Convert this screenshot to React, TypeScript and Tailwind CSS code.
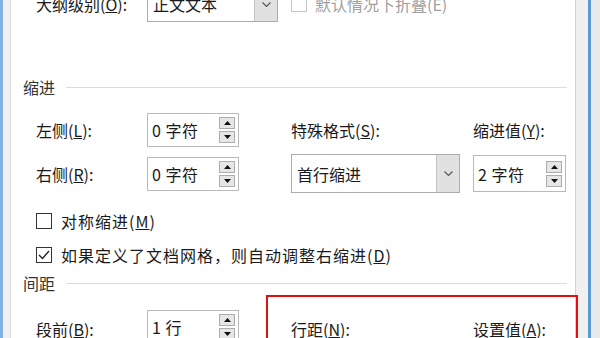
import React from "react";

const font = { fontFamily: '"Noto Sans CJK SC", "Noto Sans", sans-serif' };

function Spin({ value, width = "w-[92px]", height = "h-[34px]" }: { value: string; width?: string; height?: string }) {
  return (
    <div className={`${width} ${height} flex items-center justify-between border border-[#b9b9b9] bg-white pl-[4px] pr-[3px]`}>
      <span className="text-[16px] leading-none text-[#1a1a1a] tracking-[0.5px]">{value}</span>
      <div className="flex flex-col gap-[2px]">
        <div className="w-[16px] h-[12px] bg-[#e6e6e6] border border-[#adadad] flex items-center justify-center">
          <svg width="7" height="4" viewBox="0 0 7 4"><path d="M3.5 0L7 4H0z" fill="#111" /></svg>
        </div>
        <div className="w-[16px] h-[12px] bg-[#e6e6e6] border border-[#adadad] flex items-center justify-center">
          <svg width="7" height="4" viewBox="0 0 7 4"><path d="M0 0H7L3.5 4z" fill="#111" /></svg>
        </div>
      </div>
    </div>
  );
}

function Select({ value, width, height }: { value: string; width: string; height: string }) {
  return (
    <div className={`${width} ${height} flex border border-[#acacac] bg-white`}>
      <div className="flex-1 flex items-center pl-[5px] text-[16px] leading-none text-[#1a1a1a]">{value}</div>
      <div className="w-[23px] bg-[#e1e1e1] border-l border-[#c4c4c4] flex items-center justify-center">
        <svg width="9" height="5" viewBox="0 0 9 5"><path d="M0.5 0.5l4 4 4-4" stroke="#555" strokeWidth="1.1" fill="none" /></svg>
      </div>
    </div>
  );
}

function Checkbox({ checked = false, disabled = false }: { checked?: boolean; disabled?: boolean }) {
  return (
    <div className={`w-[16px] h-[16px] border bg-white flex items-center justify-center ${disabled ? "border-[#c6c6c6]" : "border-[#333]"}`}>
      {checked && (
        <svg width="12" height="10" viewBox="0 0 12 10"><path d="M1 5l3.5 3.5L11 1" stroke="#222" strokeWidth="1.4" fill="none" /></svg>
      )}
    </div>
  );
}

function Heading({ text }: { text: string }) {
  return (
    <div className="flex items-center h-[20px] pl-[12px] pr-[8px]">
      <span className="text-[16px] leading-none text-[#333] w-[43px]">{text}</span>
      <div className="flex-1 h-px bg-[#dcdcdc]" />
    </div>
  );
}

export default function App() {
  return (
    <div className="relative w-[600px] h-[338px] overflow-hidden flex bg-white" style={font}>
      {/* left window edge */}
      <div className="w-[3px] bg-[#7fb2e2]" />
      <div className="w-[8px] bg-[#f0f0f0] border-r border-[#dadada]" />

      {/* dialog body */}
      <div className="w-[564px] flex flex-col text-[#1a1a1a]">
        {/* 大纲级别 */}
        <div className="flex items-center h-[36px] mt-[-14px] pl-[25px]">
          <span className="w-[111px] text-[16px] leading-none">大纲级别(<u>O</u>):</span>
          <Select value="正文文本" width="w-[131px]" height="h-[36px]" />
          <div className="ml-[13px] flex items-center gap-[8px] text-[#a0a0a0]">
            <Checkbox disabled />
            <span className="text-[16px] leading-none">默认情况下折叠(E)</span>
          </div>
        </div>

        <div className="mt-[55px]">
          <Heading text="缩进" />
        </div>

        {/* 左侧 row */}
        <div className="flex items-center h-[34px] mt-[16px] pl-[25px]">
          <span className="w-[111px] text-[16px] leading-none">左侧(<u>L</u>):</span>
          <Spin value="0 字符" />
          <span className="ml-[52px] w-[182px] text-[16px] leading-none">特殊格式(<u>S</u>):</span>
          <span className="text-[16px] leading-none">缩进值(<u>Y</u>):</span>
        </div>

        {/* 右侧 row */}
        <div className="flex items-center h-[39px] mt-[7px] pl-[25px]">
          <span className="w-[111px] text-[16px] leading-none">右侧(<u>R</u>):</span>
          <Spin value="0 字符" />
          <div className="ml-[52px]">
            <Select value="首行缩进" width="w-[169px]" height="h-[39px]" />
          </div>
          <div className="ml-[13px]">
            <Spin value="2 字符" width="w-[93px]" height="h-[37px]" />
          </div>
        </div>

        <div className="flex items-center gap-[9px] h-[20px] mt-[20px] pl-[25px]">
          <Checkbox />
          <span className="text-[16px] leading-none tracking-[1px]">对称缩进(<u>M</u>)</span>
        </div>

        <div className="flex items-center gap-[9px] h-[20px] mt-[18px] pl-[25px]">
          <Checkbox checked />
          <span className="text-[16px] leading-none tracking-[1px]">如果定义了文档网格，则自动调整右缩进(<u>D</u>)</span>
        </div>

        <div className="mt-[10px]">
          <Heading text="间距" />
        </div>

        {/* 段前 row */}
        <div className="flex items-start h-[34px] mt-[17px] pl-[25px]">
          <span className="w-[111px] text-[16px] leading-none mt-[11px]">段前(<u>B</u>):</span>
          <Spin value="1 行" />
          <span className="ml-[52px] w-[182px] text-[16px] leading-none mt-[11px]">行距(<u>N</u>):</span>
          <span className="text-[16px] leading-none mt-[11px]">设置值(<u>A</u>):</span>
        </div>
      </div>

      {/* right window edge */}
      <div className="w-[13px] bg-[#f0f0f0] border-l border-[#d4d4d4]" />
      <div className="w-[3px] bg-[#5b9bd5]" />
      <div className="flex-1 bg-[#e9e9e9]" />

      {/* red annotation box */}
      <div className="absolute left-[266px] top-[295px] w-[312px] h-[60px] border-2 border-[#e01010]" />
    </div>
  );
}
